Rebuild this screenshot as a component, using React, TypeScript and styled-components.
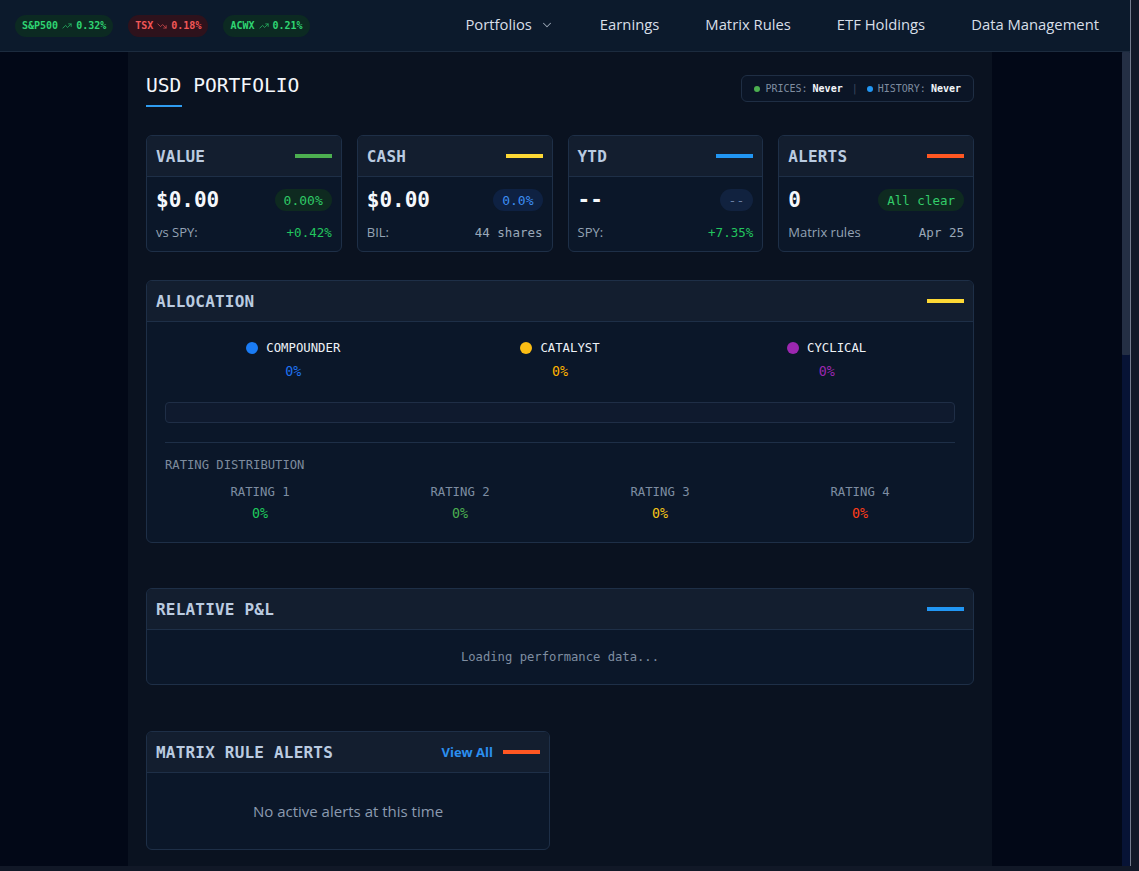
import React from "react";
import styled, { createGlobalStyle } from "styled-components";
import { ChevronDown, TrendingUp, TrendingDown } from "lucide-react";

const MONO = "'DejaVu Sans Mono', 'Liberation Mono', monospace";
const SANS = "'Open Sans', 'Noto Sans', sans-serif";

const GlobalStyle = createGlobalStyle`
  * { box-sizing: border-box; }
  html, body { margin: 0; padding: 0; background: #111827; }
  body { font-family: ${SANS}; overflow: hidden; }
`;

const Frame = styled.div`
  width: 1131px;
  height: 866px;
  display: flex;
  flex-direction: column;
  border-right: 1px solid #737b8c;
  background: #020817;
`;

const NavBar = styled.header`
  height: 52px;
  flex-shrink: 0;
  display: flex;
  align-items: center;
  justify-content: space-between;
  padding: 0 31px 0 15px;
  background: #0c1a2c;
  border-bottom: 1px solid #1c2b3e;
`;

const Tickers = styled.div`
  display: flex;
  gap: 15px;
`;

const Ticker = styled.div<{ $down?: boolean }>`
  display: flex;
  align-items: center;
  gap: 4px;
  height: 22px;
  padding: 0 7px;
  border-radius: 11px;
  font-family: ${MONO};
  font-size: 10px;
  font-weight: 700;
  color: ${(p) => (p.$down ? "#f25757" : "#2fd472")};
  background: ${(p) => (p.$down ? "#2e121c" : "#0c2a22")};
  svg { opacity: 0.8; }
`;

const NavLinks = styled.nav`
  display: flex;
  align-items: center;
  gap: 46px;
  padding-bottom: 3px;
`;

const NavLink = styled.a`
  display: flex;
  align-items: center;
  gap: 8px;
  font-size: 14.8px;
  color: #d8dfe8;
  text-decoration: none;
  svg { color: #9aa5b4; margin-top: 2px; }
`;

const Body = styled.div`
  flex: 1;
  min-height: 0;
  display: flex;
`;

const Scroll = styled.main`
  flex: 1;
  overflow: hidden;
  padding-right: 2px;
`;

const Track = styled.div`
  width: 8px;
  background: #071335;
  display: flex;
  flex-direction: column;
`;

const Thumb = styled.div`
  height: 303px;
  background: #242f44;
  border-radius: 1px;
`;

const Container = styled.div`
  width: 864px;
  min-height: 100%;
  margin: 0 auto;
  padding: 22px 18px 40px;
  background: #0a1220;
  display: flex;
  flex-direction: column;
`;

const TitleRow = styled.div`
  display: flex;
  justify-content: space-between;
  align-items: flex-start;
  margin-bottom: 28px;
`;

const PageTitle = styled.h1`
  margin: 0;
  font-family: ${MONO};
  font-size: 19.6px;
  font-weight: 400;
  color: #f4f7fb;
  line-height: 24px;
  &::after {
    content: "";
    display: block;
    width: 36px;
    height: 2px;
    margin-top: 7px;
    background: #2f9cf0;
  }
`;

const Status = styled.div`
  display: flex;
  align-items: center;
  gap: 5px;
  height: 27px;
  margin-top: 1px;
  padding: 0 12px;
  border: 1px solid #1f2e44;
  border-radius: 6px;
  background: #0b1526;
  font-family: ${MONO};
  font-size: 10px;
  color: #7f8da0;
  b { color: #f4f7fb; font-weight: 700; }
`;

const Dot = styled.span<{ $color: string; $size?: number }>`
  display: inline-block;
  width: ${(p) => p.$size ?? 6}px;
  height: ${(p) => p.$size ?? 6}px;
  border-radius: 50%;
  background: ${(p) => p.$color};
  flex-shrink: 0;
`;

const Sep = styled.span`
  margin: 0 4px;
  color: #3b4a60;
`;

const StatGrid = styled.div`
  display: grid;
  grid-template-columns: repeat(4, 1fr);
  gap: 15px;
  margin-bottom: 28px;
`;

const Card = styled.section<{ $gapAfter?: number }>`
  border: 1px solid #1e2f47;
  border-radius: 6px;
  overflow: hidden;
  background: #0b1729;
  margin-bottom: ${(p) => p.$gapAfter ?? 0}px;
`;

const CardHead = styled.div`
  height: 41px;
  display: flex;
  align-items: center;
  justify-content: space-between;
  padding: 0 9px;
  background: #131e2f;
  border-bottom: 1px solid #1e2f47;
`;

const CardTitle = styled.h2`
  margin: 0;
  font-family: ${MONO};
  font-size: 16px;
  font-weight: 700;
  letter-spacing: 0.2px;
  color: #bacbe0;
`;

const HeadRight = styled.div`
  display: flex;
  align-items: center;
  gap: 10px;
`;

const ColorBar = styled.span<{ $color: string }>`
  width: 37px;
  height: 4px;
  background: ${(p) => p.$color};
`;

const ViewAll = styled.a`
  font-family: ${SANS};
  font-size: 13px;
  font-weight: 700;
  color: #2b8ff0;
`;

const StatBody = styled.div`
  padding: 11px 9px 10px;
  display: flex;
  flex-direction: column;
  gap: 11px;
`;

const Row = styled.div`
  display: flex;
  align-items: center;
  justify-content: space-between;
`;

const BigValue = styled.div`
  font-family: ${MONO};
  font-size: 21px;
  font-weight: 700;
  color: #f5f8fc;
  line-height: 24px;
`;

const Pill = styled.span<{ $bg: string; $fg: string; $size?: number }>`
  height: 22px;
  display: inline-flex;
  align-items: center;
  padding: 0 9px;
  border-radius: 11px;
  font-family: ${MONO};
  font-size: ${(p) => p.$size ?? 13}px;
  background: ${(p) => p.$bg};
  color: ${(p) => p.$fg};
`;

const SubLabel = styled.span`
  font-family: ${SANS};
  font-size: 13px;
  color: #94a3b5;
`;

const SubValue = styled.span<{ $color?: string }>`
  font-family: ${MONO};
  font-size: 12.5px;
  color: ${(p) => p.$color ?? "#9aa8b8"};
`;

const AllocBody = styled.div`
  padding: 18px 18px 20px;
`;

const Legend = styled.div`
  display: grid;
  grid-template-columns: repeat(3, 1fr);
  margin: 0 -5px;
`;

const Column = styled.div<{ $gap?: number }>`
  display: flex;
  flex-direction: column;
  align-items: center;
  gap: ${(p) => p.$gap ?? 8}px;
`;

const LegendLabel = styled.div`
  display: flex;
  align-items: center;
  gap: 8px;
  font-family: ${MONO};
  font-size: 12.3px;
  color: #eef2f7;
  line-height: 16px;
`;

const Pct = styled.div<{ $color: string }>`
  font-family: ${MONO};
  font-size: 13.3px;
  color: ${(p) => p.$color};
  line-height: 16px;
`;

const AllocBar = styled.div`
  height: 21px;
  margin-top: 22px;
  border: 1px solid #1f2e46;
  border-radius: 4px;
  background: #0f1a2e;
`;

const Divider = styled.hr`
  border: 0;
  border-top: 1px solid #1e2f47;
  margin: 19px 0 15px;
`;

const SectionLabel = styled.div`
  font-family: ${MONO};
  font-size: 12.2px;
  color: #7d8b9d;
  margin-bottom: 12px;
`;

const Ratings = styled.div`
  display: grid;
  grid-template-columns: repeat(4, 1fr);
  margin: 0 -5px;
`;

const RatingLabel = styled.div`
  font-family: ${MONO};
  font-size: 12.3px;
  color: #7e8ea2;
  line-height: 16px;
`;

const Empty = styled.div<{ $sans?: boolean; $pad: number }>`
  padding: ${(p) => p.$pad}px 0;
  text-align: center;
  font-family: ${(p) => (p.$sans ? SANS : MONO)};
  font-size: ${(p) => (p.$sans ? 15 : 12.2)}px;
  color: ${(p) => (p.$sans ? "#8b9bb0" : "#7f8ea1")};
  line-height: 18px;
`;

const HalfGrid = styled.div`
  display: grid;
  grid-template-columns: 1fr 1fr;
  gap: 20px;
`;

const tickers = [
  { name: "S&P500", pct: "0.32%", down: false },
  { name: "TSX", pct: "0.18%", down: true },
  { name: "ACWX", pct: "0.21%", down: false },
];

const stats = [
  { title: "VALUE", bar: "#4caf50", value: "$0.00", pill: "0.00%", pillBg: "#0e2a20", pillFg: "#2ec866", label: "vs SPY:", sub: "+0.42%", subColor: "#22c55e" },
  { title: "CASH", bar: "#fdd835", value: "$0.00", pill: "0.0%", pillBg: "#0e2142", pillFg: "#3d8ef2", label: "BIL:", sub: "44 shares" },
  { title: "YTD", bar: "#2196f3", value: "--", pill: "--", pillBg: "#11223f", pillFg: "#6b7fa3", label: "SPY:", sub: "+7.35%", subColor: "#22c55e" },
  { title: "ALERTS", bar: "#ff5722", value: "0", pill: "All clear", pillBg: "#0e2a20", pillFg: "#33cc6a", label: "Matrix rules", sub: "Apr 25" },
];

const legend = [
  { name: "COMPOUNDER", color: "#1a7cf5", pct: "#1f72f0" },
  { name: "CATALYST", color: "#fbbd14", pct: "#ffb300" },
  { name: "CYCLICAL", color: "#9c27b0", pct: "#9c27b0" },
];

const ratings = [
  { name: "RATING 1", color: "#1fcb5c" },
  { name: "RATING 2", color: "#4caf50" },
  { name: "RATING 3", color: "#f5c518" },
  { name: "RATING 4", color: "#ff3d1a" },
];

export default function App() {
  return (
    <>
      <GlobalStyle />
      <Frame>
        <NavBar>
          <Tickers>
            {tickers.map((t) => (
              <Ticker key={t.name} $down={t.down}>
                {t.name}
                {t.down ? <TrendingDown size={10} strokeWidth={2} /> : <TrendingUp size={10} strokeWidth={2} />}
                {t.pct}
              </Ticker>
            ))}
          </Tickers>
          <NavLinks>
            <NavLink>
              Portfolios <ChevronDown size={14} strokeWidth={1.75} />
            </NavLink>
            <NavLink>Earnings</NavLink>
            <NavLink>Matrix Rules</NavLink>
            <NavLink>ETF Holdings</NavLink>
            <NavLink>Data Management</NavLink>
          </NavLinks>
        </NavBar>
        <Body>
          <Scroll>
            <Container>
              <TitleRow>
                <PageTitle>USD PORTFOLIO</PageTitle>
                <Status>
                  <Dot $color="#4caf50" />
                  PRICES: <b>Never</b>
                  <Sep>|</Sep>
                  <Dot $color="#2196f3" />
                  HISTORY: <b>Never</b>
                </Status>
              </TitleRow>

              <StatGrid>
                {stats.map((s) => (
                  <Card key={s.title}>
                    <CardHead>
                      <CardTitle>{s.title}</CardTitle>
                      <ColorBar $color={s.bar} />
                    </CardHead>
                    <StatBody>
                      <Row>
                        <BigValue>{s.value}</BigValue>
                        <Pill $bg={s.pillBg} $fg={s.pillFg} $size={s.pill === "All clear" ? 12.5 : 13}>
                          {s.pill}
                        </Pill>
                      </Row>
                      <Row>
                        <SubLabel>{s.label}</SubLabel>
                        <SubValue $color={s.subColor}>{s.sub}</SubValue>
                      </Row>
                    </StatBody>
                  </Card>
                ))}
              </StatGrid>

              <Card $gapAfter={45}>
                <CardHead>
                  <CardTitle>ALLOCATION</CardTitle>
                  <ColorBar $color="#fdd835" />
                </CardHead>
                <AllocBody>
                  <Legend>
                    {legend.map((l) => (
                      <Column key={l.name}>
                        <LegendLabel>
                          <Dot $color={l.color} $size={12} />
                          {l.name}
                        </LegendLabel>
                        <Pct $color={l.pct}>0%</Pct>
                      </Column>
                    ))}
                  </Legend>
                  <AllocBar />
                  <Divider />
                  <SectionLabel>RATING DISTRIBUTION</SectionLabel>
                  <Ratings>
                    {ratings.map((r) => (
                      <Column key={r.name} $gap={6}>
                        <RatingLabel>{r.name}</RatingLabel>
                        <Pct $color={r.color}>0%</Pct>
                      </Column>
                    ))}
                  </Ratings>
                </AllocBody>
              </Card>

              <Card $gapAfter={46}>
                <CardHead>
                  <CardTitle>RELATIVE P&amp;L</CardTitle>
                  <ColorBar $color="#2196f3" />
                </CardHead>
                <Empty $pad={18}>Loading performance data...</Empty>
              </Card>

              <HalfGrid>
                <Card>
                  <CardHead>
                    <CardTitle>MATRIX RULE ALERTS</CardTitle>
                    <HeadRight>
                      <ViewAll>View All</ViewAll>
                      <ColorBar $color="#ff5722" />
                    </HeadRight>
                  </CardHead>
                  <Empty $sans $pad={29}>No active alerts at this time</Empty>
                </Card>
              </HalfGrid>
            </Container>
          </Scroll>
          <Track>
            <Thumb />
          </Track>
        </Body>
      </Frame>
    </>
  );
}
